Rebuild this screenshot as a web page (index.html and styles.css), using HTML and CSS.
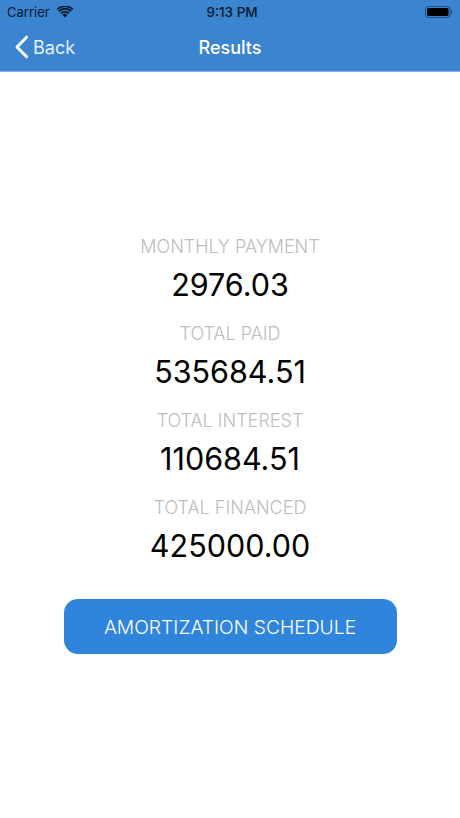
FILE: index.html
```html
<!DOCTYPE html>
<html lang="en">
<head>
    <meta charset="UTF-8">
    <meta name="viewport" content="width=device-width, initial-scale=1.0">
    <title>Results</title>
    <link rel="stylesheet" href="styles.css">
</head>
<body>
    <div class="header">
        <div class="status-bar">
            <div class="status-left">
                <span>Carrier</span>
                <svg class="wifi" viewBox="0 0 16 12" width="16" height="12">
                    <path d="M8 11.6 5.6 8.9a3.4 3.4 0 0 1 4.8 0z" fill="#04182c"/>
                    <path d="M1.9 5.2a8.7 8.7 0 0 1 12.2 0M4.1 7.500a5.6 5.6 0 0 1 7.8 0" fill="none" stroke="#04182c" stroke-width="1.9"/>
                    <path d="M.3 3.4a11 11 0 0 1 15.4 0" fill="none" stroke="#04182c" stroke-width="1.6"/>
                </svg>
            </div>
            <span class="clock">9:13 PM</span>
            <div class="status-right">
                <svg class="battery" viewBox="0 0 28 12" width="28" height="12">
                    <rect x=".5" y=".5" width="24.5" height="11" rx="3" fill="none" stroke="#04182c" stroke-opacity=".5"/>
                    <rect x="2" y="2" width="21.5" height="8" rx="1.5" fill="#000"/>
                    <rect x="26" y="4" width="1.2" height="4" rx=".6" fill="#04182c" fill-opacity=".5"/>
                </svg>
            </div>
        </div>
        <div class="nav-bar">
            <div class="back">
                <svg class="chevron" viewBox="0 0 15 24" width="15" height="24">
                    <path d="M12.6 2.2 3 12l9.600 9.800" fill="none" stroke="#fff" stroke-width="3" stroke-linecap="round" stroke-linejoin="round"/>
                </svg>
                <span>Back</span>
            </div>
            <div class="nav-title">Results</div>
        </div>
    </div>

    <div class="results">
        <div class="item">
            <div class="label">MONTHLY PAYMENT</div>
            <div class="value">2976.03</div>
        </div>
        <div class="item">
            <div class="label">TOTAL PAID</div>
            <div class="value">535684.51</div>
        </div>
        <div class="item">
            <div class="label">TOTAL INTEREST</div>
            <div class="value">110684.51</div>
        </div>
        <div class="item">
            <div class="label">TOTAL FINANCED</div>
            <div class="value">425000.00</div>
        </div>
        <button class="schedule-btn">AMORTIZATION SCHEDULE</button>
    </div>
</body>
</html>
```

FILE: styles.css
```css
body {
    font-family: Inter, "Liberation Sans", sans-serif;
    background-color: #fff;
    margin: 0;
    padding: 0;
}

.header {
    background-color: #3a84d0;
    height: 71px;
    border-bottom: 1px solid #86b4e2;
}

.status-bar {
    display: grid;
    grid-template-columns: 1fr auto 1fr;
    align-items: center;
    height: 24px;
    padding: 0 7px;
    font-size: 13px;
    color: #04182c;
}

.status-left {
    display: flex;
    align-items: center;
    gap: 7px;
}

.status-right {
    display: flex;
    justify-content: flex-end;
}

.clock {
    font-size: 13.500px;
    font-weight: 500;
    padding-left: 4px;
}

.nav-bar {
    display: flex;
    justify-content: center;
    align-items: center;
    height: 47px;
    position: relative;
    color: #fff;
}

.back {
    position: absolute;
    left: 14px;
    top: 11px;
    display: flex;
    align-items: center;
    gap: 4px;
    font-size: 18px;
    color: #e6f0fa;
}

.nav-title {
    font-size: 18px;
    font-weight: 500;
}

.results {
    display: flex;
    flex-direction: column;
    align-items: center;
    padding-top: 162.500px;
}

.item {
    text-align: center;
    height: 87px;
}

.label {
    font-size: 18px;
    font-weight: 300;
    line-height: 24px;
    color: #bdbdbd;
}

.value {
    font-size: 30.500px;
    line-height: 40px;
    margin-top: 6.500px;
    color: #000;
}

.schedule-btn {
    font-family: inherit;
    font-size: 19.300px;
    font-weight: 300;
    color: #fff;
    background-color: #2f84dc;
    border: none;
    border-radius: 14px;
    width: 333px;
    height: 55px;
    margin-top: 16.500px;
}
```
